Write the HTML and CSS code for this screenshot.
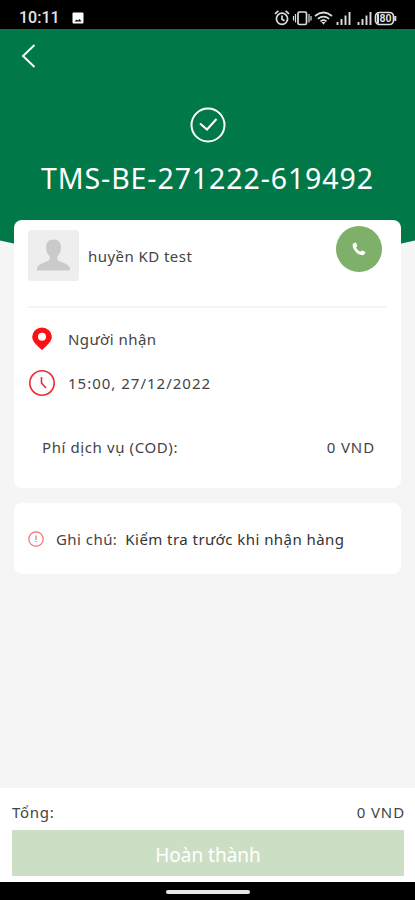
FILE: index.html
```html
<!DOCTYPE html>
<html lang="vi">
<head>
    <meta charset="UTF-8">
    <meta name="viewport" content="width=device-width, initial-scale=1.0">
    <title>Chi tiết đơn hàng</title>
    <link rel="stylesheet" href="styles.css">
</head>
<body>

<div class="status-bar">
    <span class="time">10:11</span>
    <svg class="picture" width="12" height="12" viewBox="0 0 12 12"><rect x="0.5" y="0.5" width="11" height="11" rx="1" fill="#fff"/><path d="M2.500 9.500l2-2 1.500 1 1.500-1.500 2.200 2.500z" fill="#111"/></svg>
    <div class="status-icons">
        <svg width="127" height="18" viewBox="0 0 127 18" fill="none" stroke="#ddd" stroke-width="1.700">
            <!-- Báo thức -->
            <circle cx="9" cy="9.800" r="5.600"/>
            <path d="M9 6.500v3.800l2.500 1.500M2 4.800l3.400-3M16 4.800l-3.400-3"/>
            <!-- Rung -->
            <rect x="25" y="3" width="8.500" height="12.500" rx="1.500"/>
            <path d="M22.500 5v8.500M36 5v8.500M20.500 7v4.500M38 7v4.500" stroke-width="1.200"/>
            <!-- Wifi -->
            <path d="M42 7q8.500-7 17 0M44.800 9.800q5.700-4.500 11.400 0M47.500 12.300q3-2.500 6 0" stroke-width="1.700"/>
            <path d="M48.500 13h4l-2 2.700z" fill="#ddd" stroke="none"/>
            <!-- Sóng -->
            <path d="M64.500 16v-3M68.500 16v-6M72.500 16V6.500M76.500 16V3" stroke-width="1.900"/>
            <path d="M85.500 16v-3M89.500 16v-6M93.500 16V6.500M97.500 16V3" stroke-width="1.900"/>
            <!-- Pin -->
            <rect x="102.500" y="3.500" width="18" height="12" rx="4"/>
            <path d="M122.300 7v5" stroke-width="2"/>
            <path d="M105 4.500v10" stroke-width="2"/>
            <text x="106.500" y="13.200" class="battery">80</text>
        </svg>
    </div>
</div>

<div class="header">
    <svg class="back" width="16" height="26" viewBox="0 0 16 26"><path d="M14.500 2L3 13l11.500 11" fill="none" stroke="#fff" stroke-width="1.900"/></svg>
    <svg class="check" width="36" height="36" viewBox="0 0 36 36" fill="none" stroke="#fff" stroke-width="2"><circle cx="18" cy="18" r="16.500"/><path d="M10 16.500l7 6 9.500-10.500"/></svg>
    <h1>TMS-BE-271222-619492</h1>
</div>

<div class="content">
    <div class="card order">
        <div class="customer">
            <svg class="avatar" width="51" height="51" viewBox="0 0 51 51">
                <rect width="51" height="51" rx="3" fill="#eee"/>
                <path d="M25.500 9.500c5 0 7.500 3.300 7.500 8 0 4-1.500 6.800-3.700 8.700v3.300c2 3 12.700 3.500 12.700 9.500v1.500H9V39c0-6 10.700-6.500 12.700-9.500v-3.300c-2.200-1.900-3.700-4.700-3.700-8.700 0-4.700 2.500-8 7.500-8z" fill="#cacaca"/>
            </svg>
            <span class="name">huyền KD test</span>
            <a class="call" href="#">
                <svg width="14" height="14" viewBox="0 0 14 14"><path d="M1 1.800L3 .5q.6-.3 1 .3l1.200 2.700q.2.500-.2.900l-1 1q1.300 3 4.400 4.300l1-1q.4-.4.900-.2l2.700 1.200q.6.400.3 1l-1.200 1.900q-.7.700-1.700.6C5.500 12.600 1.300 8.500.6 3.500Q.5 2.500 1 1.800z" fill="#fff"/></svg>
            </a>
        </div>
        <div class="info">
            <div class="row receiver">
                <svg width="28" height="28" viewBox="0 0 28 28"><path fill-rule="evenodd" d="M14 2.500a9.800 9.300 0 0 1 9.800 9.300c0 4.700-4.300 8.300-9.800 13.200-5.500-4.900-9.800-8.500-9.800-13.200A9.800 9.300 0 0 1 14 2.500zM14 7.800a4 4 0 1 0 0 8 4 4 0 0 0 0-8z" fill="#fb1016"/></svg>
                <span>Người nhận</span>
            </div>
            <div class="row date">
                <svg width="28" height="28" viewBox="0 0 28 28" fill="none" stroke="#ee2a2e"><circle cx="14" cy="14" r="12.200" stroke-width="1.600"/><path d="M13.500 8v6l4.500 5" stroke-width="1.600"/></svg>
                <span>15:00, 27/12/2022</span>
            </div>
        </div>
        <div class="fee">
            <span class="label">Phí dịch vụ (COD):</span>
            <span class="amount">0 VND</span>
        </div>
    </div>

    <div class="card note">
        <svg width="16" height="16" viewBox="0 0 16 16" fill="none" stroke="#f76c70" stroke-width="1.200"><circle cx="8" cy="8" r="7.200"/><path d="M8 4.500v4.500M8 10v1"/></svg>
        <span class="note-label">Ghi chú:</span>
        <span class="note-text">Kiểm tra trước khi nhận hàng</span>
    </div>
</div>

<div class="footer">
    <div class="total">
        <span class="total-label">Tổng:</span>
        <span class="amount">0 VND</span>
    </div>
    <button disabled>Hoàn thành</button>
</div>

<div class="nav-bar"><div class="handle"></div></div>

</body>
</html>
```
FILE: styles.css
```css
* {
    margin: 0;
    padding: 0;
    box-sizing: border-box;
}

body {
    width: 415px;
    height: 900px;
    display: flex;
    flex-direction: column;
    overflow: hidden;
    background-color: #f5f5f5;
    font-family: "Noto Sans", sans-serif;
    font-size: 15px;
    line-height: 20px;
    letter-spacing: 0.45px;
    color: #444;
}

svg {
    display: block;
    flex-shrink: 0;
}

.status-bar {
    height: 29px;
    padding: 7px 19px 0;
    display: flex;
    align-items: center;
    background-color: #000;
    color: #e4e4e4;
    letter-spacing: 0;
}

.time {
    font-family: Roboto, sans-serif;
    font-size: 16px;
    font-weight: 500;
    width: 53px;
}

.status-icons {
    margin-left: auto;
    margin-right: -4px;
}

.battery {
    font-family: Roboto, sans-serif;
    font-size: 10.5px;
    font-weight: 700;
    fill: #ddd;
    stroke: none;
}

.header {
    height: 235px;
    margin-bottom: -44px;
    padding-top: 14px;
    flex-shrink: 0;
    background-color: #007848;
    clip-path: circle(925px at 50% -690px);
    color: #fff;
}

.back {
    margin-left: 20px;
}

.check {
    margin: 38px auto 0;
}

h1 {
    margin-top: 17px;
    text-align: center;
    font-size: 28.5px;
    font-weight: 400;
    line-height: 36px;
    letter-spacing: 0.9px;
    white-space: nowrap;
}

.content {
    position: relative;
    flex: 1;
    padding: 0 14px;
}

.card {
    background-color: #fff;
    border-radius: 8px;
}

.order {
    height: 268px;
    padding: 0 14px;
}

.customer {
    height: 88px;
    padding-top: 6px;
    display: flex;
    align-items: flex-start;
    border-bottom: 2px solid #f4f4f4;
}

.avatar {
    margin-top: 4px;
}

.name {
    margin: 20px 0 0 9px;
}

.call {
    width: 46px;
    height: 46px;
    margin-left: auto;
    margin-right: 5px;
    display: flex;
    align-items: center;
    justify-content: center;
    border-radius: 50%;
    background-color: #7fb069;
}

.info {
    padding-top: 17px;
}

.row {
    height: 28px;
    margin-bottom: 16px;
    display: flex;
    align-items: center;
    gap: 12px;
}

.date span {
    letter-spacing: 1px;
}

.fee {
    margin-top: 40px;
    padding: 0 13px 0 14px;
    display: flex;
    justify-content: space-between;
}

.label {
    letter-spacing: 0.6px;
}

.amount {
    letter-spacing: 0.9px;
    margin-right: -1px;
}

.note {
    height: 71px;
    margin-top: 15px;
    padding: 0 14px;
    display: flex;
    align-items: center;
}

.note-label {
    margin-left: 12px;
}

.note-text {
    margin-left: 8px;
    color: #333;
}

.footer {
    height: 94px;
    padding: 14px 11px 0 12px;
    background-color: #fff;
}

.total {
    display: flex;
    justify-content: space-between;
}

.total-label {
    letter-spacing: 0.7px;
}

.footer button {
    width: 100%;
    height: 46px;
    margin-top: 8px;
    padding-top: 3px;
    border: none;
    background-color: #ccdfc4;
    color: #fff;
    font-family: inherit;
    font-size: 19px;
}

.nav-bar {
    height: 18px;
    padding-top: 8px;
    background-color: #000;
}

.handle {
    width: 84px;
    height: 4px;
    margin: 0 auto;
    border-radius: 2px;
    background-color: #e8e8e8;
}
```
